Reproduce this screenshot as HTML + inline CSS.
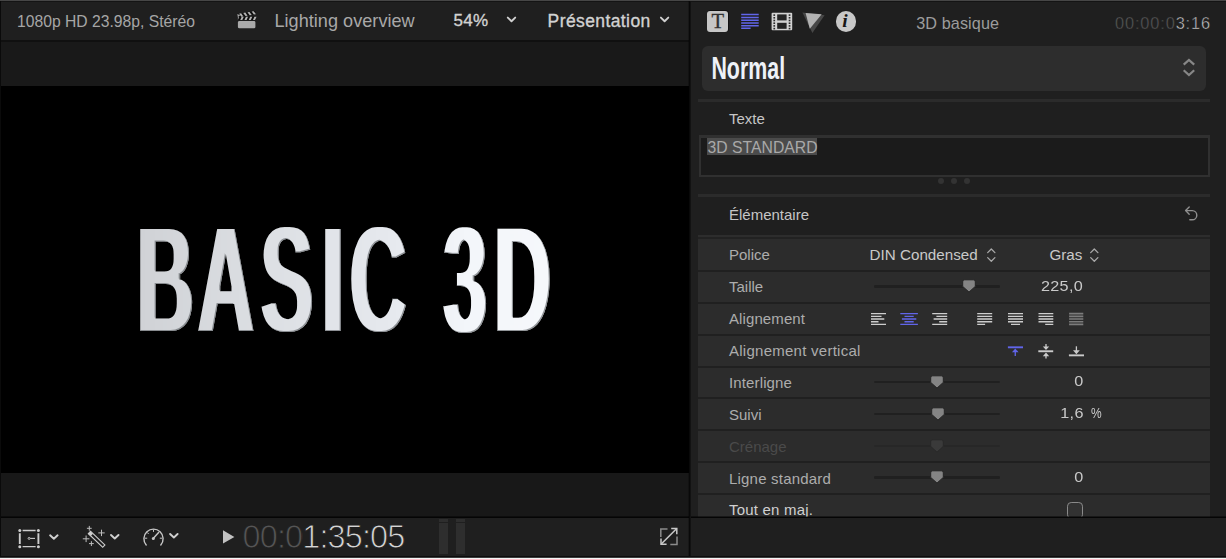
<!DOCTYPE html>
<html lang="fr">
<head>
<meta charset="utf-8">
<title>Inspecteur de texte 3D</title>
<style>
*{box-sizing:border-box;margin:0;padding:0}
html,body{width:1226px;height:559px;overflow:hidden;background:#1f1f1f}
body{position:relative;font-family:"Liberation Sans",sans-serif;color:#c4c4c4;-webkit-font-smoothing:antialiased}
.abs{position:absolute}
.t{position:absolute;white-space:nowrap;line-height:1}
svg{position:absolute;overflow:visible}

/* ---------- left viewer ---------- */
#viewer{position:absolute;left:0;top:0;width:689px;height:559px;background:#191919;overflow:hidden}
#vtool{position:absolute;left:0;top:0;width:689px;height:40px;background:#1f1f1f;border-top:1px solid #464646;box-shadow:inset 0 1px 0 #141414}
#vtoolline{position:absolute;left:0;top:40px;width:689px;height:1.6px;background:#101010}
#canvas{position:absolute;left:0;top:86px;width:689px;height:387px;background:#000}
#vbelow{position:absolute;left:0;top:473px;width:689px;height:44px;background:#181818}
#vbarline{position:absolute;left:0;top:517px;width:1226px;height:1px;background:#050505;box-shadow:0 -1px 0 rgba(0,0,0,.45)}
#vbar{position:absolute;left:0;top:518px;width:689px;height:39px;background:#1f1f1f}
#divider{position:absolute;left:689px;top:1px;width:1px;height:556px;background:#090909;box-shadow:1px 0 0 #121212,-1px 0 0 rgba(0,0,0,.25)}
#bottomdark{position:absolute;left:0;top:556px;width:1226px;height:1px;background:#0c0c0c}
#bottomwhite{position:absolute;left:0;top:557px;width:1226px;height:2px;background:#f4f4f4;border-top:1px solid #3c3c3c}
#leftedge{position:absolute;left:0;top:0;width:1px;height:557px;background:#0a0a0a}

/* ---------- inspector ---------- */
#insp{position:absolute;left:691px;top:0;width:535px;height:517px;background:#1f1f1f;overflow:hidden;border-top:1px solid #464646;box-shadow:inset 0 1px 0 #141414}
#ibar{position:absolute;left:691px;top:518px;width:535px;height:39px;background:#1f1f1f}
.sep{position:absolute;left:698px;width:512.4px;height:2.6px;background:#2b2b2b}
.row{position:absolute;left:698px;width:512px;height:30px;background:#2a2a2a}
.lbl{font-size:15px;color:#adadad;left:729px}
.val{font-size:15px;color:#c9c9c9;letter-spacing:.3px;transform:scaleX(1.08);transform-origin:100% 0}
</style>
</head>
<body>

<!-- ================= LEFT : VIEWER ================= -->
<div id="viewer">
  <div id="vtool"></div>
  <div id="vtoolline"></div>
  <div id="canvas"></div>
  <div id="vbelow"></div>
  <div id="vbar"></div>
</div>

<!-- viewer toolbar -->
<div class="t" id="fmt" style="left:17px;top:13.65px;font-size:15.7px;color:#a6a6a6">1080p HD 23.98p, Stéréo</div>
<svg id="clap" style="left:236px;top:8px" width="22" height="22" viewBox="236 8 22 22">
  <rect x="237.9" y="21" width="17.5" height="7.3" rx="1.4" fill="#aaa"/>
  <rect x="237.9" y="16.7" width="18.2" height="3.4" fill="#0e0e0e"/>
  <path d="M237.9 16.7h1.4l-1.4 3.4z" fill="#aaa"/>
  <path d="M241.70 16.70h2.1l-1.50 3.4h-2.1zM245.95 16.70h2.1l-1.50 3.4h-2.1zM250.20 16.70h2.1l-1.50 3.4h-2.1zM254.45 16.70h2.1l-1.50 3.4h-2.1z" fill="#b4b4b4"/>
  <g transform="rotate(-9.5 237.9 17.6)">
    <rect x="237.9" y="13.9" width="18.2" height="3.4" fill="#0e0e0e"/>
    <path d="M237.9 13.9l2.6 1.7-2.6 1.7z" fill="#aaa"/>
    <path d="M239.70 13.90h2.1l1.70 3.4h-2.1zM243.95 13.90h2.1l1.70 3.4h-2.1zM248.20 13.90h2.1l1.70 3.4h-2.1zM252.45 13.90h2.1l1.70 3.4h-2.1z" fill="#b4b4b4"/>
  </g>
</svg>
<div class="t" id="proj" style="left:274.4px;top:11.95px;font-size:18.1px;letter-spacing:.03px;color:#a8a8a8">Lighting overview</div>
<div class="t" id="zoom" style="left:453.6px;top:11.9px;font-size:17px;letter-spacing:.3px;color:#d2d2d2;-webkit-text-stroke:.35px #d2d2d2">54%</div>
<svg style="left:506px;top:15px" width="12" height="9" viewBox="506 15 12 9"><path d="M507.8 17.6l3.7 3.6 3.7-3.6" fill="none" stroke="#d0d0d0" stroke-width="1.9" stroke-linecap="round" stroke-linejoin="round"/></svg>
<div class="t" id="pres" style="left:547.6px;top:12.8px;font-size:17.5px;letter-spacing:.4px;color:#d2d2d2;-webkit-text-stroke:.35px #d2d2d2">Présentation</div>
<svg style="left:659px;top:15px" width="12" height="9" viewBox="659 15 12 9"><path d="M660.9 17.6l3.7 3.6 3.7-3.6" fill="none" stroke="#d0d0d0" stroke-width="1.9" stroke-linecap="round" stroke-linejoin="round"/></svg>

<!-- 3D title in canvas -->
<svg id="title" style="left:0;top:86px" width="689" height="387" viewBox="0 86 689 387">
  <defs>
    <linearGradient id="tg" gradientUnits="userSpaceOnUse" x1="274" y1="0" x2="1076" y2="0">
      <stop offset="0" stop-color="#d0d2d6"/>
      <stop offset=".3" stop-color="#dcdfe3"/>
      <stop offset=".62" stop-color="#e6e9ee"/>
      <stop offset=".8" stop-color="#f3f6fa"/>
      <stop offset="1" stop-color="#f6f8fb"/>
    </linearGradient>
    <filter id="cond" filterUnits="userSpaceOnUse" x="100" y="200" width="500" height="170" color-interpolation-filters="sRGB">
      <feMorphology operator="erode" radius="0 2.0" result="er"/>
      <feMorphology in="er" operator="dilate" radius="1.8 0" result="face"/>
      <feOffset in="face" dx="-1.3" dy="-0.9" result="sh"/>
      <feComposite in="face" in2="sh" operator="out" result="edge"/>
      <feFlood flood-color="#6f7277" flood-opacity=".75"/>
      <feComposite in2="edge" operator="in" result="edgec"/>
      <feMerge><feMergeNode in="face"/><feMergeNode in="edgec"/></feMerge>
    </filter>
  </defs>
  <g filter="url(#cond)">
  <g transform="translate(0 332.8) scale(0.5110 1)" font-family="'Liberation Sans',sans-serif" font-weight="700" font-size="153.9">
    <text id="big3d" x="268.3 386.4 510.4 630.2 684.7 776.1 867.5 967.1" y="0" fill="url(#tg)">BASIC 3D</text>
  </g>
  </g>
</svg>

<!-- viewer bottom bar -->
<svg id="xform" style="left:17px;top:527px" width="26" height="23" viewBox="17 527 26 23">
  <g fill="none" stroke="#cdcdcd">
    <path d="M22.6 530.5h13M22.6 546.7h13" stroke-width="1.3"/>
    <path d="M19.8 533.2v10.8M38.4 533.2v10.8" stroke-width="1.9"/>
  </g>
  <g fill="#cdcdcd"><circle cx="19.8" cy="530.5" r="1.5"/><circle cx="38.4" cy="530.5" r="1.5"/><circle cx="19.8" cy="546.7" r="1.5"/><circle cx="38.4" cy="546.7" r="1.5"/></g>
  <circle cx="29.1" cy="538.4" r="1" fill="none" stroke="#cdcdcd" stroke-width=".9"/>
  <path d="M30.2 538.4h4.8" stroke="#cdcdcd" stroke-width="1.1"/>
</svg>
<svg style="left:48px;top:532px" width="12" height="9" viewBox="48 532 12 9"><path d="M50.1 535.3l3.75 3.5 3.75-3.5" fill="none" stroke="#d0d0d0" stroke-width="1.9" stroke-linecap="round" stroke-linejoin="round"/></svg>

<svg id="wand" style="left:82px;top:525px" width="26" height="24" viewBox="82 525 26 24">
  <g transform="translate(90.3 533.3) rotate(43.5)">
    <rect x="-1.2" y="-1.6" width="19.8" height="3.2" fill="none" stroke="#cdcdcd" stroke-width="1.1"/>
    <rect x="-1.2" y="-1.6" width="3.4" height="3.2" fill="#cdcdcd"/>
  </g>
  <g stroke="#bdbdbd" stroke-width="1" stroke-linecap="butt">
    <path d="M89.3 525.9v4.8M86.9 528.3h4.8"/>
    <path d="M101.5 529.7v6.4M98.3 532.9h6.4"/>
    <path d="M86.1 535.5v6.6M82.8 538.8h6.6"/>
    <path d="M91.4 541.2v4.8M89 543.6h4.8"/>
  </g>
</svg>
<svg style="left:108px;top:532px" width="12" height="9" viewBox="108 532 12 9"><path d="M111 535l3.75 3.5 3.75-3.5" fill="none" stroke="#d0d0d0" stroke-width="1.9" stroke-linecap="round" stroke-linejoin="round"/></svg>

<svg id="speed" style="left:141px;top:525px" width="26" height="24" viewBox="141 525 26 24">
  <path d="M146.2 545a9.6 9.6 0 1 1 14.6 0" fill="none" stroke="#c6c6c6" stroke-width="1.4" stroke-linecap="round"/>
  <path d="M153.4 538.2l5.2-5.6" stroke="#c6c6c6" stroke-width="1.5" stroke-linecap="round"/>
  <circle cx="153.3" cy="538.4" r="1.5" fill="#c6c6c6"/>
  <g stroke="#c6c6c6" stroke-width="1" stroke-linecap="round"><path d="M145.2 538.2h1.6M147.3 532.6l1.1 1.1M153.5 530v1.5M160.2 538.2h1.6"/></g>
</svg>
<svg style="left:168px;top:531px" width="12" height="9" viewBox="168 531 12 9"><path d="M170.1 534l3.75 3.5 3.75-3.5" fill="none" stroke="#d0d0d0" stroke-width="1.9" stroke-linecap="round" stroke-linejoin="round"/></svg>

<svg style="left:222px;top:529px" width="14" height="16" viewBox="222 529 14 16"><path d="M223 530.3l11.4 6.6-11.4 6.6z" fill="#c2c2c2"/></svg>
<svg id="tc" style="left:236px;top:518px" width="180" height="39" viewBox="236 518 180 39">
  <defs><linearGradient id="tcg" gradientUnits="userSpaceOnUse" x1="242.6" y1="0" x2="404.4" y2="0"><stop offset="0" stop-color="#555"/><stop offset=".3675" stop-color="#555"/><stop offset=".3675" stop-color="#d4d4d4"/><stop offset="1" stop-color="#d4d4d4"/></linearGradient></defs>
  <text x="242.6" y="548.1" font-family="'Liberation Sans',sans-serif" font-size="32.4" letter-spacing="-.85" fill="url(#tcg)" stroke="#1f1f1f" stroke-width=".9">00:01:35:05</text>
</svg>
<div class="abs" style="left:438.8px;top:519px;width:9.4px;height:34.8px;background:#2e2e2e"></div><div class="abs" style="left:438px;top:522px;width:11px;height:1px;background:#1f1f1f"></div>
<div class="abs" style="left:455.9px;top:519px;width:9.5px;height:34.8px;background:#2e2e2e"></div><div class="abs" style="left:455px;top:522px;width:11px;height:1px;background:#1f1f1f"></div>
<svg id="full" style="left:659px;top:527px" width="20" height="20" viewBox="659 527 20 20">
  <g fill="none" stroke="#c9c9c9" stroke-width="1.5">
    <path d="M667.5 528.9h-6.7v8M670.3 544.5h6.7v-8" stroke="#8c8c8c"/>
    <path d="M661.3 544l15.2-15.2" />
    <path d="M671.2 528.6h5.6v5.6M661 538.6v5.6h5.6" stroke-linejoin="miter"/>
  </g>
</svg>


<!-- ================= RIGHT : INSPECTOR ================= -->
<div id="insp"></div>

<!-- inspector header -->
<div class="abs" style="left:706.6px;top:10.3px;width:22.4px;height:22px;border-radius:3.6px;background:#111"></div>
<div class="abs" style="left:707.3px;top:11px;width:21px;height:20.6px;border-radius:3px;background:#c6c6c6"></div>
<div class="t" id="ticon" style="left:711.6px;top:10.8px;font-family:'Liberation Serif',serif;font-size:20.6px;color:#303030;-webkit-text-stroke:.3px #303030">T</div>
<svg style="left:740px;top:13px" width="20" height="17" viewBox="740 13 20 17">
  <g stroke="#6165ea" stroke-width="1.5"><path d="M741.2 14.6h17.5M741.2 17.4h17.5M741.2 20.15h17.5M741.2 22.9h17.5M741.2 25.65h17.5M741.2 28.3h9.4"/></g>
</svg>
<svg id="film" style="left:771px;top:12px" width="22" height="19" viewBox="771 12 22 19">
  <rect x="771.6" y="12.8" width="20.6" height="17.5" rx="1" fill="#d2d2d2"/>
  <rect x="777.2" y="14.4" width="9.4" height="6" fill="#242424"/>
  <rect x="777.2" y="22.8" width="9.4" height="6" fill="#242424"/>
  <g fill="#2a2a2a">
    <rect x="773.4" y="14.3" width="1.7" height="1.6"/><rect x="773.4" y="17" width="1.7" height="1.6"/><rect x="773.4" y="19.7" width="1.7" height="1.6"/><rect x="773.4" y="22.4" width="1.7" height="1.6"/><rect x="773.4" y="25.1" width="1.7" height="1.6"/><rect x="773.4" y="27.8" width="1.7" height="1.6"/>
    <rect x="788.7" y="14.3" width="1.7" height="1.6"/><rect x="788.7" y="17" width="1.7" height="1.6"/><rect x="788.7" y="19.7" width="1.7" height="1.6"/><rect x="788.7" y="22.4" width="1.7" height="1.6"/><rect x="788.7" y="25.1" width="1.7" height="1.6"/><rect x="788.7" y="27.8" width="1.7" height="1.6"/>
  </g>
</svg>
<svg id="tri" style="left:801px;top:11px" width="25" height="23" viewBox="801 11 25 23">
  <path d="M802.4 12.4l22.2 2.9-12.2 17.7z" fill="#474747"/>
  <path d="M805.6 13l16.1 1.3-11.9 14.5z" fill="#b2b2b2"/>
</svg>
<div class="abs" style="left:835.6px;top:11.1px;width:20.6px;height:20.6px;border-radius:50%;background:#c8c8c8"></div>
<div class="t" id="iicon" style="left:842.3px;top:11.2px;font-family:'Liberation Serif',serif;font-style:italic;font-weight:700;font-size:19.5px;color:#161616">i</div>
<div class="t" id="ititle" style="left:916.2px;top:14.9px;font-size:16.2px;color:#9c9c9c;letter-spacing:.1px">3D basique</div>
<svg id="itc" style="left:1110px;top:8px" width="110" height="30" viewBox="1110 8 110 30">
  <defs><linearGradient id="itcg" gradientUnits="userSpaceOnUse" x1="1115" y1="0" x2="1211" y2="0"><stop offset="0" stop-color="#5c5c5c"/><stop offset=".6275" stop-color="#5c5c5c"/><stop offset=".6275" stop-color="#d0d0d0"/><stop offset="1" stop-color="#d0d0d0"/></linearGradient></defs>
  <text x="1115" y="28.8" font-family="'Liberation Sans',sans-serif" font-size="16.4" letter-spacing=".85" fill="url(#itcg)" stroke="#1f1f1f" stroke-width=".45">00:00:03:16</text>
</svg>

<!-- style popup -->
<div class="abs" style="left:702.2px;top:45.6px;width:504px;height:45.6px;border-radius:6px;background:#2d2d2d"></div>
<svg id="normal" style="left:702px;top:45px" width="120" height="46" viewBox="702 45 120 46">
  <g transform="translate(711.4 78.7) scale(.69 1)"><text id="normaltxt" x="0" y="0" font-family="'Liberation Sans',sans-serif" font-weight="700" font-size="31" fill="#eef2f8">Normal</text></g>
</svg>
<svg style="left:1181px;top:57px" width="16" height="22" viewBox="1181 57 16 22">
  <path d="M1183.7 64.6l5.25-4.7 5.25 4.7M1183.7 70.3l5.25 4.7 5.25-4.7" fill="none" stroke="#878787" stroke-width="2.2" stroke-linecap="butt" stroke-linejoin="miter"/>
</svg>

<!-- Texte section -->
<div class="sep" style="top:99.2px"></div>
<div class="t lbl" style="top:110.8px;color:#c6c6c6">Texte</div>
<div class="abs" style="left:698.6px;top:135px;width:511.3px;height:41.6px;background:#1b1b1b;border:2.4px solid #303030;border-top-width:3px"></div>
<div class="abs" style="left:707.4px;top:137.8px;width:110px;height:17.4px;background:#4b4b4b"></div>
<div class="t" id="std" style="left:707.6px;top:139.5px;font-size:15.75px;color:#a9a9a9">3D STANDARD</div>
<div class="abs" style="left:937.8px;top:178.1px;width:6.2px;height:6.2px;border-radius:50%;background:#333"></div>
<div class="abs" style="left:951.1px;top:178.1px;width:6.2px;height:6.2px;border-radius:50%;background:#333"></div>
<div class="abs" style="left:964.2px;top:178.1px;width:6.2px;height:6.2px;border-radius:50%;background:#333"></div>

<!-- Élémentaire section -->
<div class="sep" style="top:194.2px"></div>
<div class="t lbl" style="top:207.4px;color:#c6c6c6">Élémentaire</div>
<svg id="reset" style="left:1183px;top:205px" width="17" height="17" viewBox="1183 205 17 17">
  <path d="M1189.2 207l-3.6 3.6 3.6 3.6" fill="none" stroke="#8f8f8f" stroke-width="1.4" stroke-linecap="round" stroke-linejoin="round"/>
  <path d="M1186 210.6h6.2a4.6 4.6 0 0 1 0 9.2h-2.4" fill="none" stroke="#8f8f8f" stroke-width="1.4" stroke-linecap="round"/>
</svg>
<div class="abs" style="left:698px;top:234.5px;width:512.4px;height:2.5px;background:#2d2d2d"></div>
<div class="abs" style="left:698px;top:237px;width:512.4px;height:1.8px;background:#222"></div>
<div class="abs" style="left:698.2px;top:238.8px;width:512.2px;height:278.2px;background:#2c2c2c"></div>
<div class="abs" style="left:698.2px;top:270.00px;width:512.2px;height:2px;background:#202020"></div>
<div class="abs" style="left:698.2px;top:301.87px;width:512.2px;height:2px;background:#202020"></div>
<div class="abs" style="left:698.2px;top:333.74px;width:512.2px;height:2px;background:#202020"></div>
<div class="abs" style="left:698.2px;top:365.61px;width:512.2px;height:2px;background:#202020"></div>
<div class="abs" style="left:698.2px;top:397.48px;width:512.2px;height:2px;background:#202020"></div>
<div class="abs" style="left:698.2px;top:429.35px;width:512.2px;height:2px;background:#202020"></div>
<div class="abs" style="left:698.2px;top:461.22px;width:512.2px;height:2px;background:#202020"></div>
<div class="abs" style="left:698.2px;top:493.09px;width:512.2px;height:2px;background:#202020"></div>
<div class="t lbl" style="top:247.0px;">Police</div>
<div class="t" id="fontname" style="left:869.6px;top:246.9px;font-size:15.2px;color:#c9c9c9">DIN Condensed</div>
<svg style="left:986.2px;top:247.2px" width="11" height="16" viewBox="-1 -8 11 16"><path d="M.7 -2.4l3.6-3.6 3.6 3.6M.7 2.6l3.6 3.6 3.6-3.6" fill="none" stroke="#a8a8a8" stroke-width="1.3" stroke-linecap="round" stroke-linejoin="round"/></svg>
<div class="t" id="fontstyle" style="left:1049.4px;top:246.9px;font-size:15.2px;color:#c9c9c9">Gras</div>
<svg style="left:1089.4px;top:247.2px" width="11" height="16" viewBox="-1 -8 11 16"><path d="M.7 -2.4l3.6-3.6 3.6 3.6M.7 2.6l3.6 3.6 3.6-3.6" fill="none" stroke="#a8a8a8" stroke-width="1.3" stroke-linecap="round" stroke-linejoin="round"/></svg>
<div class="t lbl" style="top:279.0px;">Taille</div>
<div class="abs" style="left:873.6px;top:285.2px;width:126.4px;height:2.6px;border-radius:1.3px;background:#202020"></div>
<svg style="left:961.0px;top:278.2px" width="16" height="16" viewBox="-8 -8 16 16"><path d="M-6.3 -4.2a2 2 0 0 1 2 -2h8.6a2 2 0 0 1 2 2v4.6l-6.3 5.7-6.3-5.7z" fill="#848484" stroke="#242424" stroke-width="1"/></svg>
<div class="t val" style="right:142.6px;top:278.0px;">225,0</div>
<div class="t lbl" style="top:311.0px;letter-spacing:.1px">Alignement</div>
<svg id="alignicons" style="left:860px;top:303.9px" width="240" height="30" viewBox="860 303.9 240 30"><path d="M871.0 313.45h15.0M871.0 316.18h10.5M871.0 318.91h13.3M871.0 321.64h7.5M871.0 324.37h15.0" stroke="#cdcdcd" stroke-width="1.3" fill="none"/><path d="M900.3 313.45h17.6M904.5 316.18h9.2M901.9 318.91h14.4M904.5 321.64h9.2M900.3 324.37h17.6" stroke="#6165ea" stroke-width="1.3" fill="none"/><path d="M932.2 313.45h15.0M936.4 316.18h10.8M933.6 318.91h13.6M939.2 321.64h8.0M932.2 324.37h15.0" stroke="#cdcdcd" stroke-width="1.3" fill="none"/><path d="M977.2 313.45h15.0M977.2 316.18h15.0M977.2 318.91h15.0M977.2 321.64h15.0M977.2 324.37h7.9" stroke="#cdcdcd" stroke-width="1.3" fill="none"/><path d="M1008.0 313.45h15.0M1008.0 316.18h15.0M1008.0 318.91h15.0M1008.0 321.64h15.0M1011.0 324.37h9.0" stroke="#cdcdcd" stroke-width="1.3" fill="none"/><path d="M1038.5 313.45h14.8M1038.5 316.18h14.8M1038.5 318.91h14.8M1038.5 321.64h14.8M1045.2 324.37h8.1" stroke="#cdcdcd" stroke-width="1.3" fill="none"/><path d="M1069.1 313.45h14.2M1069.1 316.18h14.2M1069.1 318.91h14.2M1069.1 321.64h14.2M1069.1 324.37h14.2" stroke="#7c7c7c" stroke-width="1.7" fill="none"/></svg>
<div class="t lbl" style="top:343.0px;letter-spacing:.26px">Alignement vertical</div>
<svg id="valign" style="left:1000px;top:335.7px" width="100" height="30" viewBox="1000 335.7 100 30">
  <path d="M1007.9 347h15.1" stroke="#6165ea" stroke-width="1.9"/>
  <path d="M1015.25 355.6v-5" stroke="#6165ea" stroke-width="1.3"/>
  <path d="M1015.25 348.1l3.3 3.9h-6.6z" fill="#6165ea"/>
  <path d="M1038.3 350.95h14.9" stroke="#cacaca" stroke-width="1.9"/>
  <path d="M1046 343.6v3.5M1046 358.2v-3.5" stroke="#cacaca" stroke-width="1.3"/>
  <path d="M1046 349.8l3.2-3.7h-6.4zM1046 352.2l3.2 3.7h-6.4z" fill="#cacaca"/>
  <path d="M1068.9 355.05h15.1" stroke="#cacaca" stroke-width="1.9"/>
  <path d="M1076.4 346v5" stroke="#cacaca" stroke-width="1.3"/>
  <path d="M1076.4 353.9l3.4-4h-6.8z" fill="#cacaca"/>
</svg>
<div class="t lbl" style="top:375.0px;letter-spacing:.13px">Interligne</div>
<div class="abs" style="left:873.6px;top:380.8px;width:126.4px;height:2.6px;border-radius:1.3px;background:#202020"></div>
<svg style="left:929.3px;top:373.8px" width="16" height="16" viewBox="-8 -8 16 16"><path d="M-6.3 -4.2a2 2 0 0 1 2 -2h8.6a2 2 0 0 1 2 2v4.6l-6.3 5.7-6.3-5.7z" fill="#848484" stroke="#242424" stroke-width="1"/></svg>
<div class="t val" style="right:142.6px;top:373.0px;">0</div>
<div class="t lbl" style="top:407.0px;">Suivi</div>
<div class="abs" style="left:873.6px;top:412.7px;width:126.4px;height:2.6px;border-radius:1.3px;background:#202020"></div>
<svg style="left:930.0px;top:405.7px" width="16" height="16" viewBox="-8 -8 16 16"><path d="M-6.3 -4.2a2 2 0 0 1 2 -2h8.6a2 2 0 0 1 2 2v4.6l-6.3 5.7-6.3-5.7z" fill="#848484" stroke="#242424" stroke-width="1"/></svg>
<div class="t val" style="right:142.6px;top:405.0px;">1,6</div>
<div class="t" style="left:1091.2px;top:405.0px;font-size:15px;color:#c9c9c9;transform:scaleX(.8);transform-origin:0 0">%</div>
<div class="t lbl" style="top:439.0px;color:#4a4a4a">Crénage</div>
<div class="abs" style="left:873.6px;top:444.6px;width:126.4px;height:2.6px;border-radius:1.3px;background:#272727"></div>
<svg style="left:929.3px;top:437.6px" width="16" height="16" viewBox="-8 -8 16 16"><path d="M-6.3 -4.2a2 2 0 0 1 2 -2h8.6a2 2 0 0 1 2 2v4.6l-6.3 5.7-6.3-5.7z" fill="#3a3a3a" stroke="#292929" stroke-width="1"/></svg>
<div class="t lbl" style="top:471.0px;letter-spacing:.2px">Ligne standard</div>
<div class="abs" style="left:873.6px;top:476.4px;width:126.4px;height:2.6px;border-radius:1.3px;background:#202020"></div>
<svg style="left:929.3px;top:469.4px" width="16" height="16" viewBox="-8 -8 16 16"><path d="M-6.3 -4.2a2 2 0 0 1 2 -2h8.6a2 2 0 0 1 2 2v4.6l-6.3 5.7-6.3-5.7z" fill="#848484" stroke="#242424" stroke-width="1"/></svg>
<div class="t val" style="right:142.6px;top:469.0px;">0</div>
<div class="t lbl" style="top:502.0px;color:#d0d0d0;letter-spacing:.2px">Tout en maj.</div>
<div class="abs" style="left:1066.7px;top:501.8px;width:16.2px;height:16.8px;border:1.2px solid #8a8a8a;border-radius:4.2px;background:#323232"></div>
<div id="ibar"></div>

<div id="vbarline"></div>
<div id="divider"></div>
<div id="leftedge"></div>
<div id="topline" class="abs" style="left:0;top:0;width:1226px;height:1px;background:#464646"></div>
<div id="bottomdark"></div>
<div id="bottomwhite"></div>

</body>
</html>
